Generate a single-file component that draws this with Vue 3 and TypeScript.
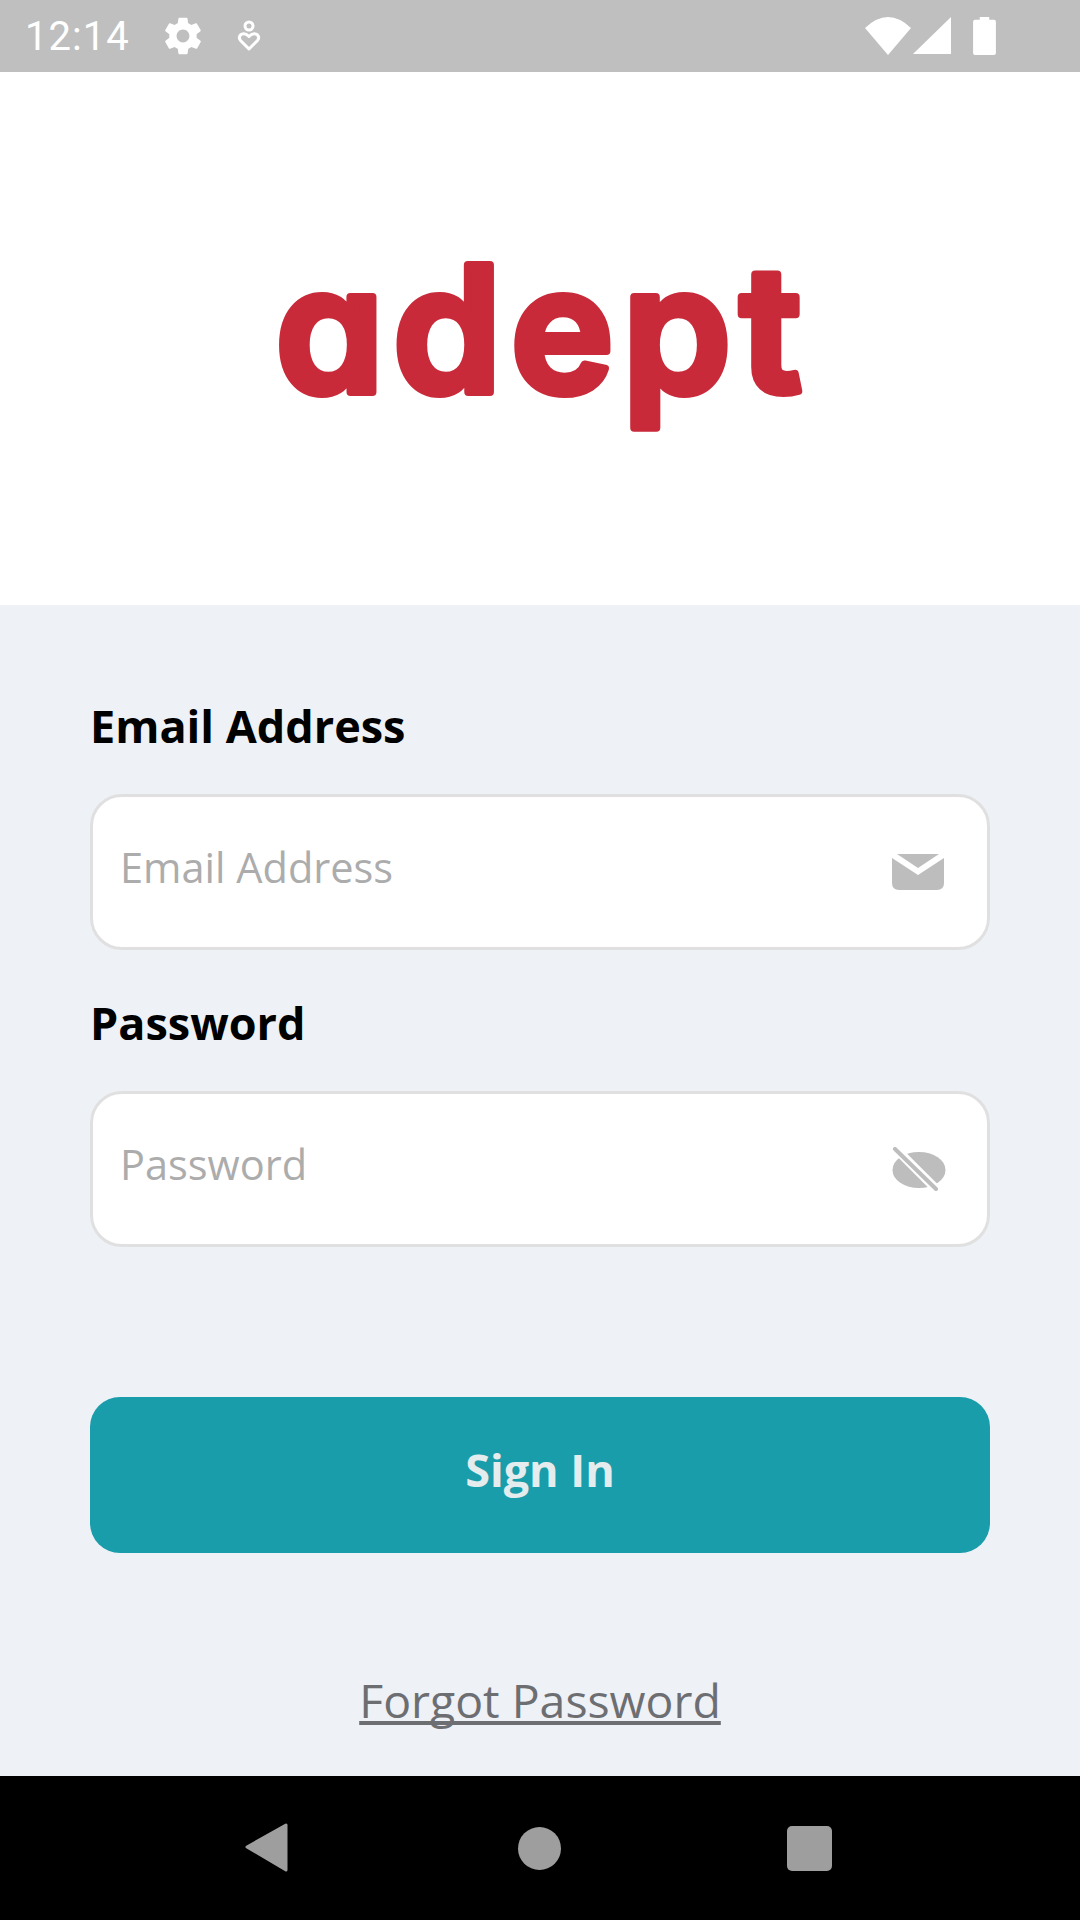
<template>
  <div class="screen">
    <div class="status-bar">
      <div class="status-left">
        <span class="clock">12:14</span>
        <svg class="gear" viewBox="0 0 24 24" width="44" height="44">
          <path fill="#fff" d="M19.4 13c.04-.33.07-.66.07-1s-.03-.67-.07-1l2.1-1.65c.2-.15.25-.42.12-.64l-2-3.46c-.12-.22-.39-.3-.61-.22l-2.49 1c-.52-.4-1.08-.73-1.69-.98l-.38-2.65C14.46 2.18 14.25 2 14 2h-4c-.25 0-.46.18-.49.42l-.38 2.65c-.61.25-1.17.59-1.69.98l-2.49-1c-.23-.09-.49 0-.61.22l-2 3.46c-.13.22-.07.49.12.64L4.57 11c-.04.33-.07.67-.07 1s.03.67.07 1l-2.11 1.65c-.19.15-.24.42-.12.64l2 3.46c.12.22.39.3.61.22l2.49-1c.52.4 1.08.73 1.69.98l.38 2.65c.03.24.24.42.49.42h4c.25 0 .46-.18.49-.42l.38-2.65c.61-.25 1.17-.59 1.69-.98l2.49 1c.23.09.49 0 .61-.22l2-3.46c.12-.22.07-.49-.12-.64L19.4 13zM12 15.5c-1.93 0-3.5-1.57-3.5-3.5s1.57-3.5 3.5-3.5 3.5 1.57 3.5 3.5-1.57 3.5-3.5 3.5z"/>
        </svg>
        <svg class="heart" viewBox="0 0 24 32" width="24" height="32">
          <circle cx="12" cy="6" r="4" fill="none" stroke="#fff" stroke-width="3"/>
          <path d="M12 29 L3.5 20.5 Q1 17 4 14.5 Q8 12.5 12 16.5 Q16 12.5 20 14.5 Q23 17 20.5 20.5 Z" fill="none" stroke="#fff" stroke-width="3" stroke-linejoin="round"/>
        </svg>
      </div>
      <div class="status-right">
        <svg class="wifi" viewBox="0 0 46 38" width="46" height="38">
          <path fill="#fff" d="M0 11 Q23 -11 46 11 L23 38 Z"/>
        </svg>
        <svg viewBox="0 0 38 38" width="38" height="38">
          <path fill="#fff" d="M38 0 V37 H0 Z"/>
        </svg>
        <svg class="battery" viewBox="0 0 24 40" width="23" height="38">
          <path fill="#fff" d="M7 0 H17 V3 H22 Q24 3 24 5 V38 Q24 40 22 40 H2 Q0 40 0 38 V5 Q0 3 2 3 H7 Z"/>
        </svg>
      </div>
    </div>

    <div class="logo-area">
      <svg class="logo" viewBox="0 0 1080 533" width="1080" height="533">
        <text x="543" y="320" text-anchor="middle">adept</text>
      </svg>
    </div>

    <form class="form" @submit.prevent>
      <label class="label">Email Address</label>
      <div class="field">
        <span class="placeholder">Email Address</span>
        <svg viewBox="0 0 52 36" width="52" height="36">
          <path fill="#bdbdbd" d="M5 0 H47 L26 14 Z"/>
          <path fill="#bdbdbd" d="M0 4 L26 21 L52 4 V29 Q52 36 45 36 H7 Q0 36 0 29 Z"/>
        </svg>
      </div>

      <label class="label pw-label">Password</label>
      <div class="field">
        <span class="placeholder">Password</span>
        <svg class="eye" viewBox="0 0 54 44" width="54" height="44">
          <ellipse cx="27" cy="23" rx="26.5" ry="18" fill="#bdbdbd"/>
          <path d="M3 1 L45 43" stroke="#fff" stroke-width="9"/>
          <path d="M3 2 L44 42" stroke="#bdbdbd" stroke-width="4" stroke-linecap="round"/>
        </svg>
      </div>

      <button class="sign-in" type="submit"><span>Sign In</span></button>
      <a class="forgot">Forgot Password</a>
    </form>

    <div class="nav-bar">
      <svg viewBox="0 0 44 50" width="44" height="50">
        <path fill="#9e9e9e" stroke="#9e9e9e" stroke-width="3" stroke-linejoin="round" d="M41 2 V47 L2 24 Z"/>
      </svg>
      <span class="home"></span>
      <span class="recents"></span>
    </div>
  </div>
</template>

<script setup lang="ts">
</script>

<style>
html, body { margin: 0; }
</style>

<style scoped>
.screen {
  width: 1080px;
  height: 1920px;
  display: flex;
  flex-direction: column;
  font-family: "Open Sans", sans-serif;
  overflow: hidden;
}
.status-bar {
  height: 72px;
  flex: none;
  background: #bfbfbf;
  display: flex;
  align-items: center;
  justify-content: space-between;
  padding: 0 84px 0 25px;
}
.status-left, .status-right { display: flex; align-items: center; }
.clock {
  font-family: Roboto, sans-serif;
  font-size: 40px;
  color: #fff;
  letter-spacing: 1px;
  width: 136px;
}
.heart { margin-left: 32px; }
.status-right { gap: 2px; }
.battery { margin-left: 20px; }

.logo-area {
  height: 533px;
  flex: none;
  background: #fff;
}
.logo { display: block; }
.logo text {
  font-family: Inter, sans-serif;
  font-feature-settings: "cv11" 1;
  font-weight: 600;
  font-size: 174px;
  letter-spacing: 9px;
  fill: #c92a3a;
  stroke: #c92a3a;
  stroke-width: 8px;
  stroke-linejoin: round;
}

.form {
  flex: 1;
  background: #eef1f6;
  display: flex;
  flex-direction: column;
  padding: 91px 90px 0;
}
.label {
  font-size: 45px;
  font-weight: 700;
  line-height: 60px;
  color: #000;
}
.pw-label { margin-top: 43px; }
.field {
  margin-top: 38px;
  height: 156px;
  box-sizing: border-box;
  background: #fff;
  border: 3px solid #e0e0e0;
  border-radius: 32px;
  display: flex;
  align-items: center;
  justify-content: space-between;
  padding: 0 43px 0 27px;
}
.eye { margin-right: -2px; }
.placeholder {
  font-size: 41.5px;
  color: #acacac;
  margin-top: -10px;
}
.sign-in {
  margin-top: 150px;
  height: 156px;
  flex: none;
  background: #199daa;
  color: #e4ecee;
  border: 0;
  border-radius: 30px;
  font-family: inherit;
  font-size: 45px;
  font-weight: 700;
  padding: 0 0 12px;
}
.forgot {
  margin-top: 115px;
  align-self: center;
  font-size: 46.4px;
  line-height: 64px;
  color: #6d6e71;
  text-decoration: underline;
  text-decoration-skip-ink: none;
}
.nav-bar {
  height: 144px;
  flex: none;
  background: #000;
  display: flex;
  align-items: center;
  padding-left: 245px;
  gap: 229px;
}
.home {
  width: 43px;
  height: 43px;
  border-radius: 50%;
  background: #9e9e9e;
}
.recents {
  width: 45px;
  height: 45px;
  margin-left: -3px;
  border-radius: 5px;
  background: #9e9e9e;
}
</style>
